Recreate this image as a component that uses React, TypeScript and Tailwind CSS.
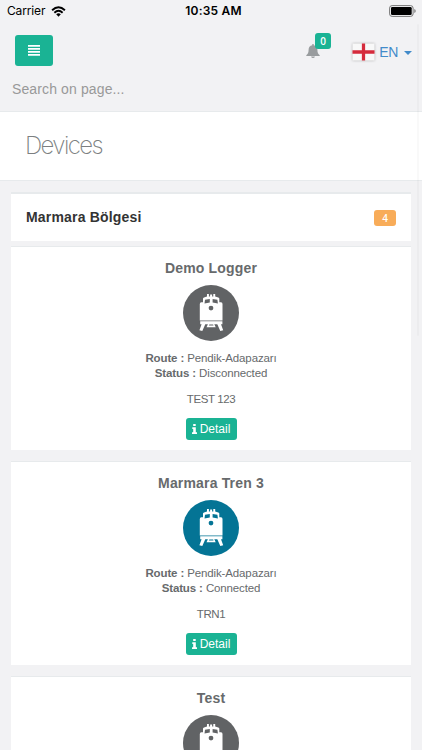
import React from "react";

type Device = { name: string; color: string; details?: { route: string; status: string; code: string } };

const devices: Device[] = [
  {
    name: "Demo Logger",
    color: "#616365",
    details: { route: "Pendik-Adapazarı", status: "Disconnected", code: "TEST 123" },
  },
  {
    name: "Marmara Tren 3",
    color: "#047495",
    details: { route: "Pendik-Adapazarı", status: "Connected", code: "TRN1" },
  },
  { name: "Test", color: "#616365" },
];

function TrainIcon({ color }: { color: string }) {
  return (
    <svg viewBox="0 0 56 56" className="block h-14 w-14">
      <circle cx="28" cy="28" r="28" fill={color} />
      <path
        fill="#fff"
        d="M24 9h1.900v2.500h1.200V9.500h2v2h1.200V9h1.900v2.600l3.100.8q1 .3 1 1.200v3.700h1.700q1.500.2 1.500 1.600v16.700H16.800V18.900q0-1.400 1.500-1.600h1.700v-3.700q0-.9 1-1.200l3-.8z"
      />
      <path fill={color} d="M22 14.700l4.800-.8v3.500l-5.300 1zM34.400 14.700l-4.800-.8v3.500l5.300 1z" />
      <circle cx="28" cy="23.100" r="2.400" fill={color} />
      <path
        fill="#fff"
        d="M17.200 36.300h22.200v2.900h-1.400l2.200 6-2.900.9-3-6.900H22.300l-3 6.900-2.900-.9 2.200-6h-1.400zM25 39.100h6.200l1.500 3.200h-9.200z"
      />
      <path fill={color} d="M26.300 39.500h3.800l.4 1h-4.600z" />
    </svg>
  );
}

function InfoIcon() {
  return (
    <svg viewBox="0 0 5 10" className="h-[10px] w-[5px]" fill="#fff">
      <path d="M1.200 0h2.500v2H1.200zM.3 3.300h3.500v5H5V10H0V8.300h1.200V5H.3z" />
    </svg>
  );
}

function DeviceCard({ device }: { device: Device }) {
  const { details } = device;
  return (
    <section className="flex h-[204px] shrink-0 flex-col items-center border-t border-[#e7eaec] bg-white text-[11.500px] leading-[15px] tracking-[-0.13px] text-[#676a6c]">
      <h3 className="mt-[12px] text-[14px] font-bold leading-[18px] tracking-[0.17px]">{device.name}</h3>
      <div className="mt-[8px]">
        <TrainIcon color={device.color} />
      </div>
      {details && (
        <>
          <p className="mt-[10px]">
            <b>Route :</b> {details.route}
          </p>
          <p>
            <b>Status :</b> {details.status}
          </p>
          <p className="mt-[11px] tracking-[-0.4px]">{details.code}</p>
          <button className="mt-[11px] flex h-[22px] w-[51px] items-center justify-center gap-[3px] rounded-[3px] bg-[#1ab394] text-[12px] leading-[22px] tracking-normal text-white">
            <InfoIcon />
            Detail
          </button>
        </>
      )}
    </section>
  );
}

function StatusBar() {
  return (
    <div className="grid h-[22px] shrink-0 grid-cols-3 items-center pl-[7px] pr-[6px] font-[Inter,sans-serif] text-[12px] leading-[16px] text-black">
      <div className="flex items-center gap-[6px]">
        <span className="tracking-[-0.15px]">Carrier</span>
        <svg viewBox="0 0 16 12" className="h-[11px] w-[15px]" fill="none" stroke="#000" strokeWidth="2.100">
          <path d="M1 4.600q7-6.400 14 0M3.500 7.300q4.500-4 9 0" />
          <path d="M5.500 9q2.500-2.200 5 0L8 11.800z" fill="#000" stroke="none" />
        </svg>
      </div>
      <span className="pl-[4px] text-center font-semibold tracking-[0.2px]">10:35 AM</span>
      <svg viewBox="0 0 27 12" className="h-[12px] w-[27px] justify-self-end">
        <rect x=".6" y=".6" width="23.500" height="10.800" rx="2.500" fill="none" stroke="#777" />
        <rect x="2" y="2" width="20.700" height="8" rx="1.200" />
        <path d="M25.300 4q1.400.5 1.400 2t-1.400 2z" fill="#777" />
      </svg>
    </div>
  );
}

function NavBar() {
  return (
    <header className="flex h-[44px] shrink-0 items-start pl-[14.500px] pr-[10px] pt-[13px]">
      <button className="flex h-[31px] w-[38.500px] shrink-0 items-center justify-center rounded-[3px] bg-[#1ab394]">
        <svg viewBox="0 0 12 11" className="h-[11px] w-[12px]" fill="#fff">
          <path d="M0 0h12v1.800H0zM0 3h12v1.800H0zM0 6h12v1.800H0zM0 9h12v1.800H0z" />
        </svg>
      </button>
      <div className="relative ml-auto mt-[9px]">
        <svg viewBox="0 0 14 14" className="h-[14px] w-[14px]" fill="#999c9e">
          <path d="M6.300 0h1.400v1.200c2.600.4 3.700 2.300 3.700 4.600 0 3 .8 4.400 2.300 5.400v.8H.3v-.8c1.500-1 2.300-2.400 2.300-5.400 0-2.300 1.100-4.200 3.700-4.600zM5 12.500h4Q8.500 14 7 14T5 12.500z" />
        </svg>
        <span className="absolute -top-[11px] left-[9px] flex h-[16px] w-[16px] items-center justify-center rounded-[3px] bg-[#1ab394] font-['Open_Sans',sans-serif] text-[10px] font-semibold leading-none text-white">
          0
        </span>
      </div>
      <div className="ml-[32px] mt-[8px] flex items-center text-[14px] leading-[18px] tracking-[-0.300px] text-[#428bca]">
        <svg viewBox="0 0 24 18" className="h-[18px] w-[23px] drop-shadow-[0_0_1px_#aaa]" preserveAspectRatio="none">
          <path d="M.5.500h23v17H.5z" fill="#f8f8f8" />
          <path d="M10.300.500h3.400v17h-3.400zM.5 7.300h23v3.500H.5z" fill="#d52b3c" />
        </svg>
        <span className="ml-[4px]">EN</span>
        <span className="ml-[6px] mt-px border-x-4 border-t-4 border-x-transparent border-t-[#428bca]" />
      </div>
    </header>
  );
}

export default function App() {
  return (
    <main className="relative flex h-[750px] w-full flex-col overflow-hidden bg-[#f2f2f4] font-['Liberation_Sans',Arial,sans-serif] text-[#676a6c]">
      <StatusBar />
      <NavBar />
      <p className="ml-[12px] mt-[14px] shrink-0 text-[14px] leading-[18px] tracking-[0.12px] text-[#999]">
        Search on page...
      </p>
      <div className="mt-[13px] h-[70px] shrink-0 border-y border-[#e7eaec] bg-white pl-[25px] pt-[20px]">
        <h1 className="font-[Inter,sans-serif] text-[24px] font-extralight leading-[28px] tracking-[-1.600px] text-[#7c7f81]">
          Devices
        </h1>
      </div>
      <div className="flex shrink-0 flex-col px-[11px] pt-[11px]">
        <div className="flex h-[49px] items-center justify-between border-t-2 border-[#e7eaec] bg-white pl-[15px] pr-[15px]">
          <h2 className="text-[14px] font-bold tracking-[0.18px] text-[#333]">Marmara Bölgesi</h2>
          <span className="flex h-[16px] w-[22px] items-center justify-center rounded-[3px] bg-[#f8ac59] font-['Open_Sans',sans-serif] text-[10px] font-semibold leading-none text-white">
            4
          </span>
        </div>
        <div className="mt-[5px] flex flex-col gap-[11px]">
          {devices.map((device) => (
            <DeviceCard key={device.name} device={device} />
          ))}
        </div>
      </div>
      <span className="absolute right-[3px] top-[24px] h-[312px] w-[2px] rounded-full bg-black/[0.025]" />
    </main>
  );
}
